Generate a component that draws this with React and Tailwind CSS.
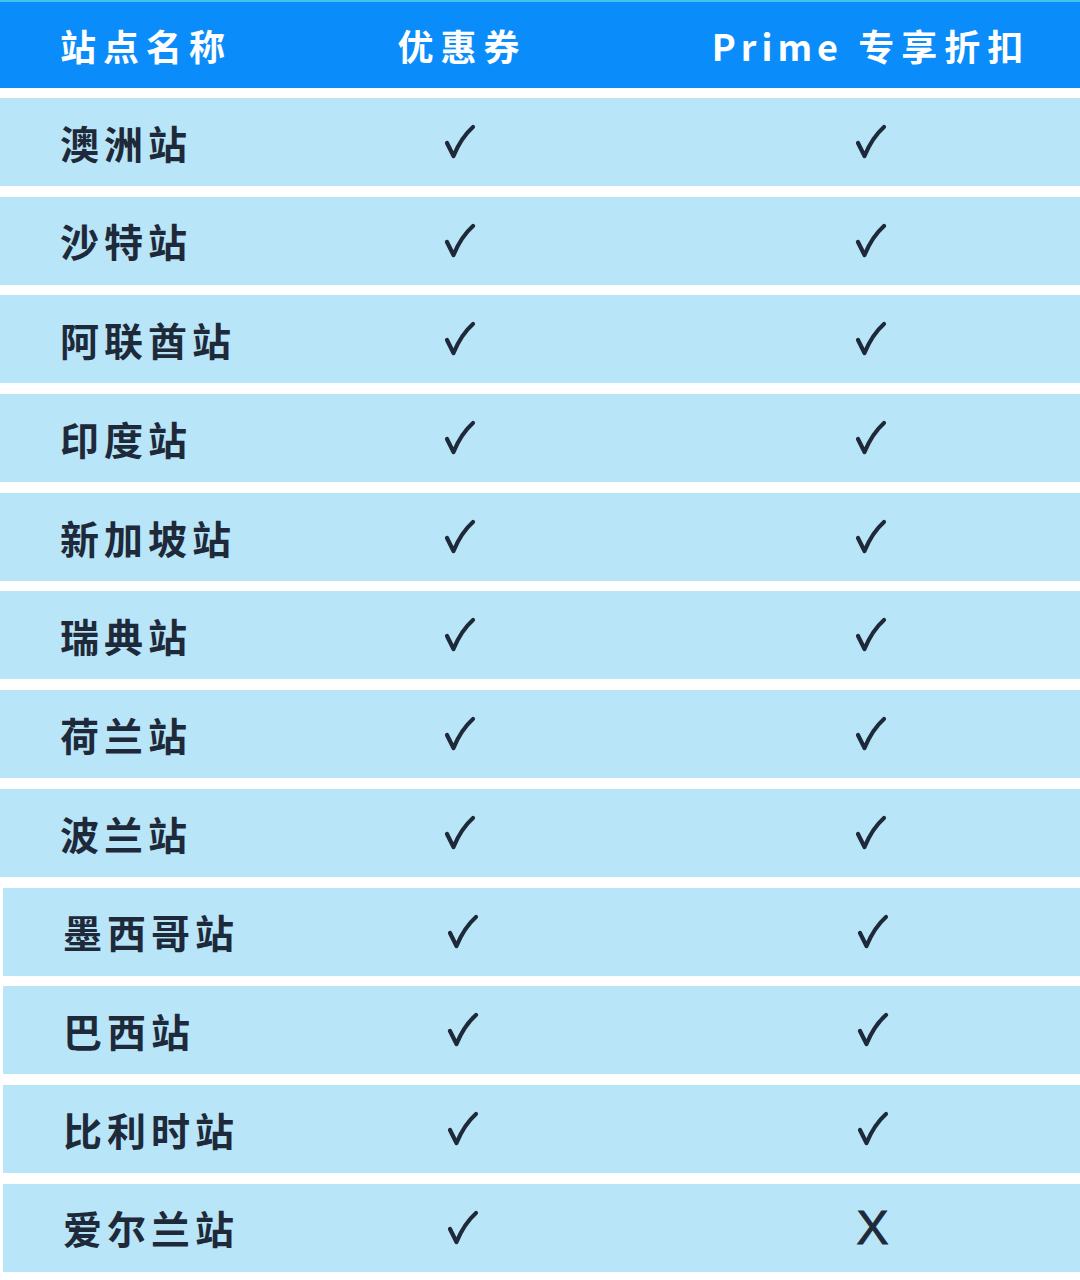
import React from "react";

const stations = [
  { name: "澳洲站", coupon: true, prime: true },
  { name: "沙特站", coupon: true, prime: true },
  { name: "阿联酋站", coupon: true, prime: true },
  { name: "印度站", coupon: true, prime: true },
  { name: "新加坡站", coupon: true, prime: true },
  { name: "瑞典站", coupon: true, prime: true },
  { name: "荷兰站", coupon: true, prime: true },
  { name: "波兰站", coupon: true, prime: true },
  { name: "墨西哥站", coupon: true, prime: true },
  { name: "巴西站", coupon: true, prime: true },
  { name: "比利时站", coupon: true, prime: true },
  { name: "爱尔兰站", coupon: true, prime: false },
];

const Check = () => (
  <svg width="32" height="36" viewBox="0 0 32 36" fill="none">
    <path
      d="M3 19 L9.5 32 C14 21 20 11 29 3"
      stroke="#1e2a3a"
      strokeWidth="4.2"
      strokeLinecap="round"
      strokeLinejoin="round"
    />
  </svg>
);

const Mark = ({ ok }) =>
  ok ? (
    <Check />
  ) : (
    <span className="text-[48px] leading-none text-[#1e2a3a] font-['Liberation_Sans',sans-serif] [-webkit-text-stroke:1px_#1e2a3a]">
      X
    </span>
  );

const App = () => {
  return (
    <div className="w-[1080px] h-[1280px] bg-white font-['Noto_Sans_CJK_SC',sans-serif]">
      <div className="flex items-center h-[88px] bg-[#0a8cfb] border-t-2 border-[#3fc4ef] text-white font-bold text-[36px] tracking-[7px]">
        <div className="w-[340px] pl-[60px]">站点名称</div>
        <div className="w-[240px] text-center pl-[4px]">优惠券</div>
        <div className="flex-1 pl-[82px] text-center">
          <span className="tracking-[5px]">Prime</span> 专享折扣
        </div>
      </div>

      <div className="flex flex-col gap-[10.7px] mt-[10px]">
        {stations.map((s, i) => (
          <div
            key={i}
            className={`flex items-center h-[88px] bg-[#b9e5f9] text-[#1e2a3a] ${
              i >= 8 ? "ml-[3px]" : ""
            }`}
          >
            <div className="w-[340px] pl-[60px] font-bold text-[39px] tracking-[5px]">
              {s.name}
            </div>
            <div className="w-[240px] flex justify-center">
              <Mark ok={s.coupon} />
            </div>
            <div className="flex-1 pl-[82px] flex justify-center">
              <Mark ok={s.prime} />
            </div>
          </div>
        ))}
      </div>
    </div>
  );
};

export default App;
